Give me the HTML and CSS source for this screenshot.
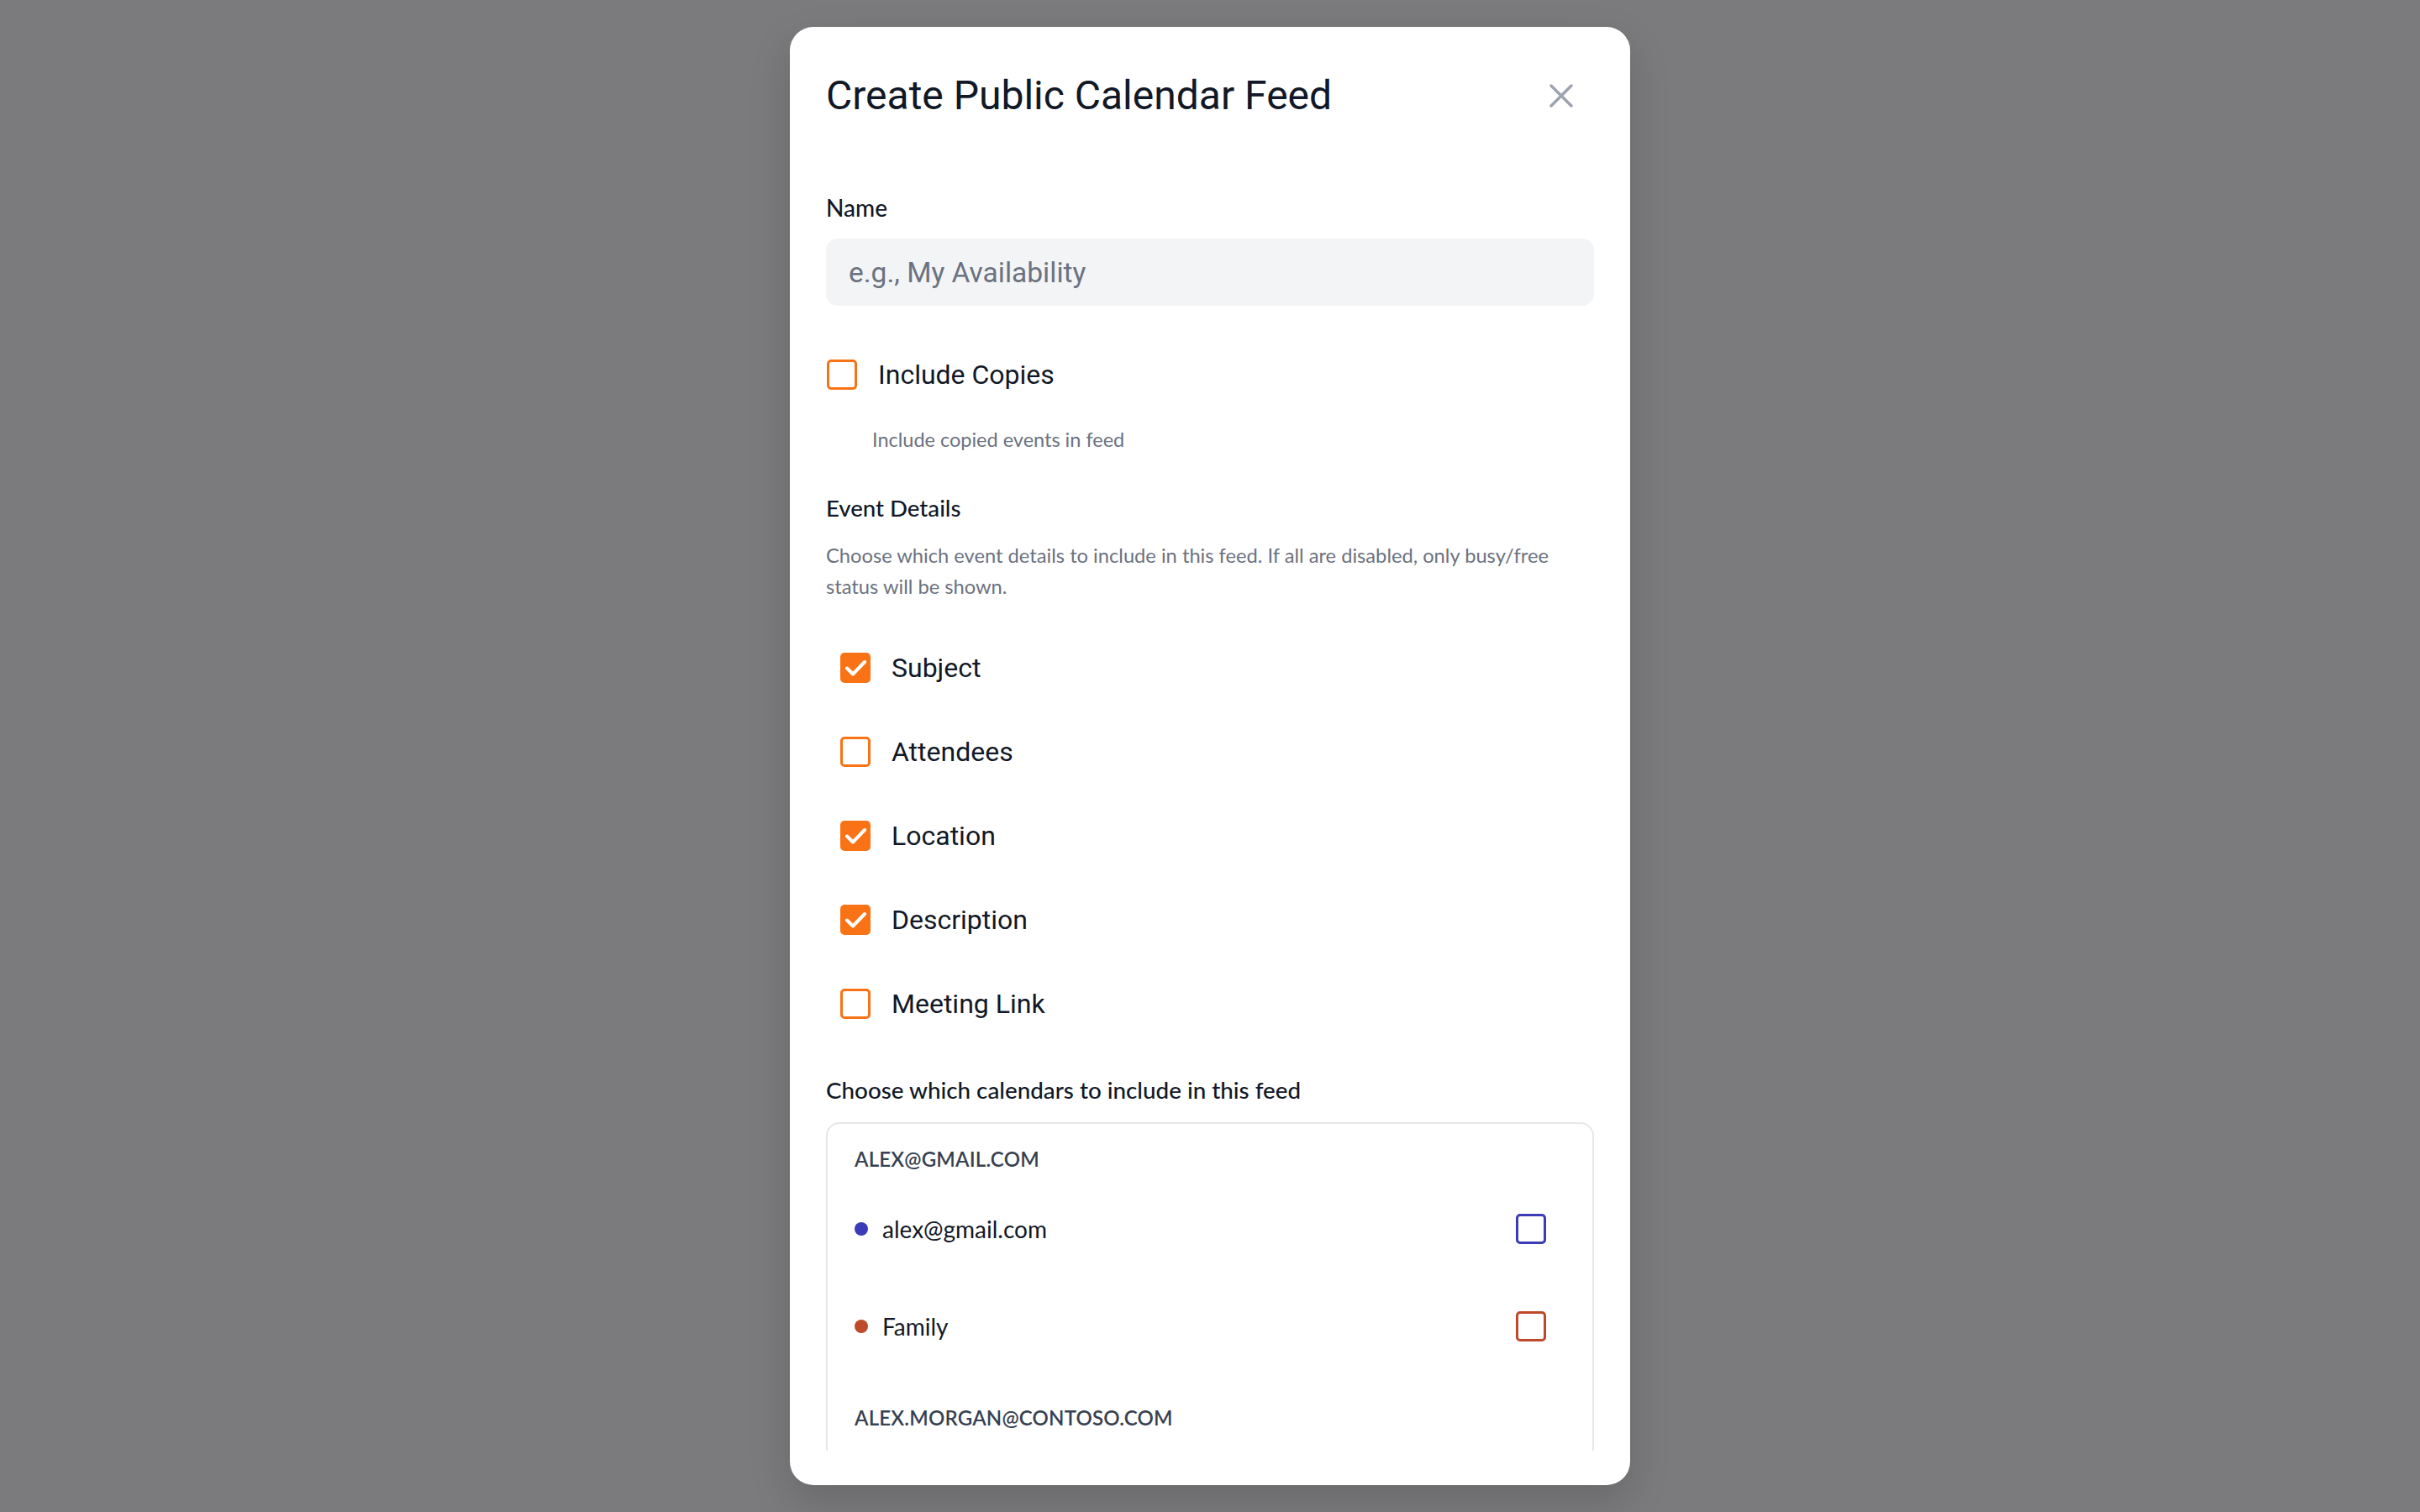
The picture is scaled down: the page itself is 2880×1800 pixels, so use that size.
FILE: index.html
```html
<!DOCTYPE html>
<html lang="en">
<head>
    <meta charset="UTF-8">
    <meta name="viewport" content="width=device-width, initial-scale=1.0">
    <title>Create Public Calendar Feed</title>
    <link rel="stylesheet" href="styles.css">
</head>
<body>
    <div class="overlay">
        <div class="modal">
            <div class="modal-header">
                <h2>Create Public Calendar Feed</h2>
                <button class="close-btn" aria-label="Close">
                    <svg width="28" height="28" viewBox="0 0 28 28">
                        <path d="M2 2 L26 26 M26 2 L2 26" stroke="#9ca3af" stroke-width="3.4" stroke-linecap="round" fill="none"/>
                    </svg>
                </button>
            </div>

            <div class="modal-body">
                <label class="field-label" for="feedName">Name</label>
                <input type="text" id="feedName" class="text-input" placeholder="e.g., My Availability">

                <div class="toggle-row">
                    <span class="box"></span>
                    <span class="toggle-text">Include Copies</span>
                </div>
                <p class="help">Include copied events in feed</p>

                <h3 class="section-title">Event Details</h3>
                <p class="section-desc">Choose which event details to include in this feed. If all are disabled, only busy/free status will be shown.</p>

                <div class="detail-list">
                    <div class="detail-row">
                        <span class="box checked">
                            <svg width="36" height="36" viewBox="0 0 36 36"><path d="M8 18.5 L15 25.5 L29 11" stroke="#fff" stroke-width="4" fill="none" stroke-linecap="round" stroke-linejoin="round"/></svg>
                        </span>
                        <span class="toggle-text">Subject</span>
                    </div>
                    <div class="detail-row">
                        <span class="box"></span>
                        <span class="toggle-text">Attendees</span>
                    </div>
                    <div class="detail-row">
                        <span class="box checked">
                            <svg width="36" height="36" viewBox="0 0 36 36"><path d="M8 18.5 L15 25.5 L29 11" stroke="#fff" stroke-width="4" fill="none" stroke-linecap="round" stroke-linejoin="round"/></svg>
                        </span>
                        <span class="toggle-text">Location</span>
                    </div>
                    <div class="detail-row">
                        <span class="box checked">
                            <svg width="36" height="36" viewBox="0 0 36 36"><path d="M8 18.5 L15 25.5 L29 11" stroke="#fff" stroke-width="4" fill="none" stroke-linecap="round" stroke-linejoin="round"/></svg>
                        </span>
                        <span class="toggle-text">Description</span>
                    </div>
                    <div class="detail-row">
                        <span class="box"></span>
                        <span class="toggle-text">Meeting Link</span>
                    </div>
                </div>

                <p class="calendars-label">Choose which calendars to include in this feed</p>

                <div class="calendar-box">
                    <div class="account">
                        <div class="account-name">alex@gmail.com</div>
                        <div class="cal-row">
                            <span class="dot dot-indigo"></span>
                            <span class="cal-name">alex@gmail.com</span>
                            <span class="cal-check check-indigo"></span>
                        </div>
                        <div class="cal-row">
                            <span class="dot dot-rust"></span>
                            <span class="cal-name">Family</span>
                            <span class="cal-check check-rust"></span>
                        </div>
                    </div>
                    <div class="account">
                        <div class="account-name">alex.morgan@contoso.com</div>
                    </div>
                </div>
            </div>
        </div>
    </div>
</body>
</html>
```

FILE: styles.css
```css
body {
    margin: 0;
    padding: 0;
    font-family: "Lato", "Noto Sans", sans-serif;
    color: #111827;
}

.overlay {
    position: fixed;
    inset: 0;
    background-color: #7b7b7d;
    display: flex;
    align-items: center;
    justify-content: center;
}

.modal {
    width: 1000px;
    max-height: calc(100vh - 64px);
    box-sizing: border-box;
    background-color: #ffffff;
    border-radius: 28px;
    box-shadow: 0 20px 50px rgba(0, 0, 0, 0.15);
    display: flex;
    flex-direction: column;
    padding-bottom: 41px;
    overflow: hidden;
}

.modal-header {
    display: flex;
    align-items: center;
    justify-content: space-between;
    padding: 54px 43px 0;
}

.modal-header h2 {
    margin: 0;
    font-family: "Roboto", sans-serif;
    font-weight: 400;
    font-size: 48px;
    line-height: 56px;
    color: #111827;
}

.close-btn {
    border: none;
    background: none;
    padding: 0;
    margin-right: 25px;
    width: 28px;
    height: 28px;
    display: flex;
    cursor: pointer;
}

.modal-body {
    flex: 1;
    min-height: 0;
    overflow-y: auto;
    scrollbar-width: none;
    padding: 85px 43px 0;
}

.field-label {
    display: block;
    font-size: 28px;
    font-weight: 500;
    line-height: 40px;
    margin-bottom: 17px;
}

.text-input {
    display: block;
    width: 100%;
    height: 80px;
    box-sizing: border-box;
    border: none;
    border-radius: 14px;
    background-color: #f3f4f6;
    padding: 0 27px;
    font-family: "Roboto", sans-serif;
    font-size: 33.5px;
    color: #111827;
    outline: none;
}

.text-input::placeholder {
    color: #6b7280;
}

.toggle-row {
    display: flex;
    align-items: center;
    gap: 25px;
    height: 48px;
    margin-top: 58px;
    padding-left: 1px;
}

.box {
    width: 36px;
    height: 36px;
    box-sizing: border-box;
    border: 3px solid #f97316;
    border-radius: 5px;
    flex-shrink: 0;
    display: flex;
    align-items: center;
    justify-content: center;
}

.box.checked {
    background-color: #f97316;
    border: none;
}

.toggle-text {
    font-family: "Roboto", sans-serif;
    font-size: 32px;
    line-height: 48px;
    color: #111827;
}

.help {
    margin: 37px 0 0;
    padding-left: 55px;
    font-size: 23.5px;
    line-height: 33px;
    color: #6b7280;
}

.section-title {
    margin: 45px 0 0;
    font-size: 27.6px;
    font-weight: 500;
    line-height: 40px;
}

.section-desc {
    margin: 18px 0 0;
    font-size: 23.7px;
    line-height: 37px;
    color: #6b7280;
}

.detail-list {
    margin-top: 28px;
    padding-left: 17px;
}

.detail-row {
    display: flex;
    align-items: center;
    gap: 25px;
    height: 100px;
}

.calendars-label {
    margin: 33px 0 18px;
    font-size: 27.8px;
    font-weight: 500;
    line-height: 40px;
}

.calendar-box {
    border: 2px solid #e5e7eb;
    border-radius: 16px;
    padding: 24px 32px 120px;
}

.account + .account {
    margin-top: 33px;
}

.account-name {
    font-size: 24px;
    font-weight: 600;
    line-height: 36px;
    letter-spacing: 0.2px;
    text-transform: uppercase;
    color: #374151;
    margin-bottom: 7px;
}

.cal-row {
    display: flex;
    align-items: center;
    height: 116px;
    padding-right: 23px;
}

.dot {
    width: 16px;
    height: 16px;
    border-radius: 50%;
    margin-right: 17px;
    flex-shrink: 0;
}

.cal-name {
    flex: 1;
    font-size: 28px;
    line-height: 40px;
    color: #111827;
}

.cal-check {
    width: 36px;
    height: 36px;
    box-sizing: border-box;
    border: 3.5px solid;
    border-radius: 5px;
}

.dot-indigo { background-color: #3b3bb8; }
.check-indigo { border-color: #3b3bb8; }
.dot-rust { background-color: #bd4a2a; }
.check-rust { border-color: #bd4a2a; }
```
